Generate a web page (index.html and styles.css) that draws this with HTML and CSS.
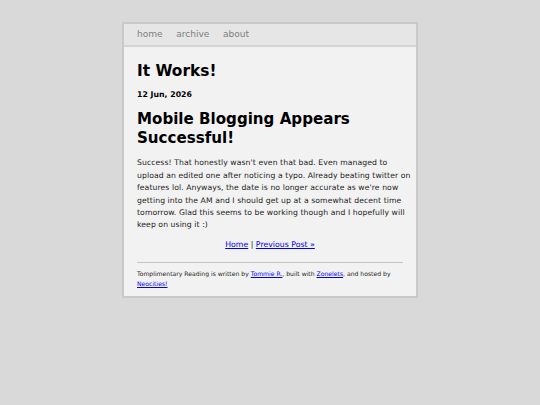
FILE: index.html
```html
<!DOCTYPE html>
<html>
<head>
<meta charset="utf-8">
<link rel="stylesheet" href="styles.css">
</head>
<body>
<div class="page">
  <nav class="nav">
    <a href="#">home</a>
    <a href="#">archive</a>
    <a href="#">about</a>
  </nav>
  <main class="content">
    <h1 class="site-title">It Works!</h1>
    <p class="date">12 Jun, 2026</p>
    <h2 class="post-title">Mobile Blogging Appears Successful!</h2>
    <p class="body">Success! That honestly wasn't even that bad. Even managed to<br>upload an edited one after noticing a typo. Already beating twitter on<br>features lol. Anyways, the date is no longer accurate as we're now<br>getting into the AM and I should get up at a somewhat decent time<br>tomorrow. Glad this seems to be working though and I hopefully will<br>keep on using it :)</p>
    <p class="pager"><a href="#">Home</a> | <a href="#">Previous Post »</a></p>
    <hr class="rule">
    <p class="footer">Tomplimentary Reading is written by <a href="#">Tommie R.</a>, built with <a href="#">Zonelets</a>, and hosted by <a href="#">Neocities!</a></p>
  </main>
</div>
</body>
</html>
```
FILE: styles.css
```css
html, body {
  margin: 0;
  padding: 0;
  background: #d9d9d9;
}
body {
  font-family: "DejaVu Sans", Verdana, sans-serif;
  color: #222;
  padding-top: 22px;
}
.page {
  width: 292px;
  margin: 0 auto;
  border: 2px solid #c9c9c9;
  background: #f2f2f2;
}
.nav {
  display: flex;
  gap: 13.5px;
  background: #e6e6e6;
  border-bottom: 2px solid #d4d4d4;
  padding: 4px 13px 4px;
  height: 13px;
  font-size: 9.05px;
  line-height: 13px;
}
.nav a {
  color: #808080;
  text-decoration: none;
}
.content {
  padding: 13px 13px 7px 13px;
}
.site-title {
  font-size: 15.4px;
  margin: 0;
  line-height: 22px;
  color: #000;
}
.date {
  font-size: 7.8px;
  font-weight: bold;
  margin: 7px 0 0;
  line-height: 12px;
  color: #000;
}
.post-title {
  font-size: 15.1px;
  margin: 8.5px 0 0;
  line-height: 19px;
  color: #000;
}
.body {
  font-size: 7.7px;
  letter-spacing: 0.08px;
  line-height: 12.4px;
  margin: 9.8px 0 0;
  white-space: nowrap;
}
.pager {
  text-align: center;
  font-size: 7.8px;
  line-height: 12.4px;
  margin: 7.6px 0 0;
}
.pager a, .footer a {
  color: #0000ee;
}
.rule {
  border: 0;
  border-top: 1px solid #c4c4c4;
  margin: 10px 0 0;
}
.footer {
  font-size: 6.1px;
  line-height: 10px;
  margin: 6px 0 0;
}
```
